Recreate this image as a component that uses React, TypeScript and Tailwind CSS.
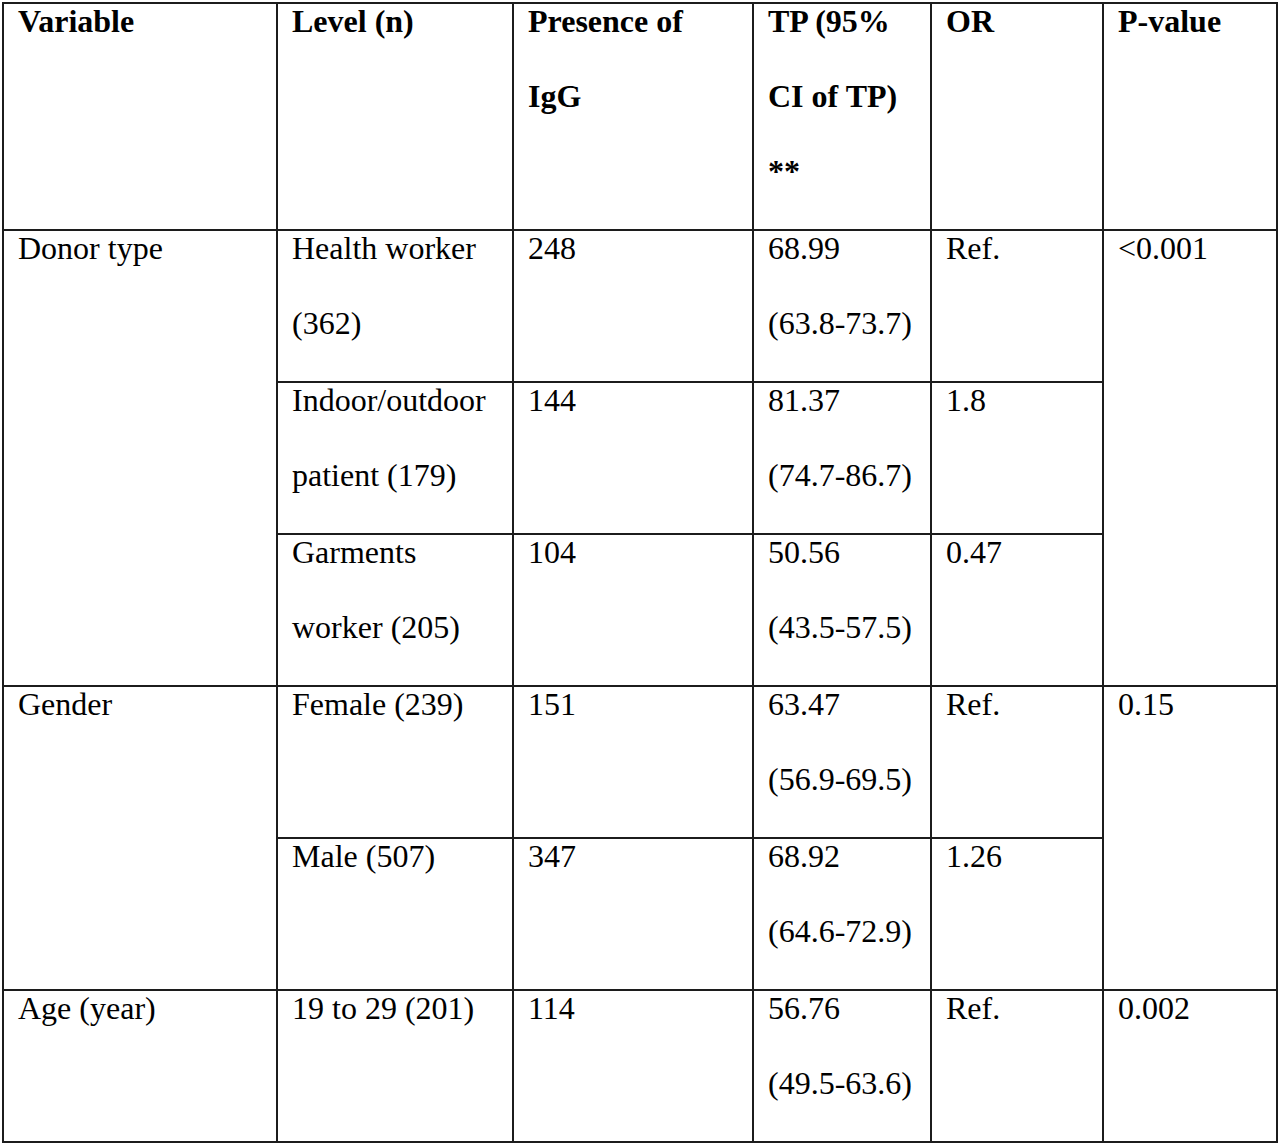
import React from "react";

type Cell = { lines: string[]; rowSpan?: number };

const Lines = ({ lines }: { lines: string[] }) => (
  <div>
    {lines.map((l, i) => (
      <div key={i} className="h-[75px] leading-[35px] whitespace-nowrap">
        {l}
      </div>
    ))}
  </div>
);

const td = "border-2 border-[#1c1c1c] align-top pl-[14px] pr-1 py-0";

export default function App() {
  const header = [
    ["Variable"],
    ["Level (n)"],
    ["Presence of", "IgG"],
    ["TP (95%", "CI of TP)", "**"],
    ["OR"],
    ["P-value"],
  ];

  const rows: Cell[][] = [
    [
      { lines: ["Donor type"], rowSpan: 3 },
      { lines: ["Health worker", "(362)"] },
      { lines: ["248"] },
      { lines: ["68.99", "(63.8-73.7)"] },
      { lines: ["Ref."] },
      { lines: ["<0.001"], rowSpan: 3 },
    ],
    [
      { lines: ["Indoor/outdoor", "patient (179)"] },
      { lines: ["144"] },
      { lines: ["81.37", "(74.7-86.7)"] },
      { lines: ["1.8"] },
    ],
    [
      { lines: ["Garments", "worker (205)"] },
      { lines: ["104"] },
      { lines: ["50.56", "(43.5-57.5)"] },
      { lines: ["0.47"] },
    ],
    [
      { lines: ["Gender"], rowSpan: 2 },
      { lines: ["Female (239)"] },
      { lines: ["151"] },
      { lines: ["63.47", "(56.9-69.5)"] },
      { lines: ["Ref."] },
      { lines: ["0.15"], rowSpan: 2 },
    ],
    [
      { lines: ["Male (507)"] },
      { lines: ["347"] },
      { lines: ["68.92", "(64.6-72.9)"] },
      { lines: ["1.26"] },
    ],
    [
      { lines: ["Age (year)"] },
      { lines: ["19 to 29 (201)"] },
      { lines: ["114"] },
      { lines: ["56.76", "(49.5-63.6)"] },
      { lines: ["Ref."] },
      { lines: ["0.002"] },
    ],
  ];

  return (
    <div className="w-[1280px] h-[1143px] bg-white overflow-hidden pt-[2px] pl-[2px]">
      <table
        className="table-fixed border-collapse w-[1274px] text-black text-[32px]"
        style={{ fontFamily: '"Liberation Serif", "Times New Roman", serif' }}
      >
        <colgroup>
          <col className="w-[274px]" />
          <col className="w-[236px]" />
          <col className="w-[240px]" />
          <col className="w-[178px]" />
          <col className="w-[172px]" />
          <col className="w-[174px]" />
        </colgroup>
        <thead>
          <tr>
            {header.map((h, i) => (
              <th key={i} className={`${td} text-left font-bold`}>
                <Lines lines={h} />
              </th>
            ))}
          </tr>
        </thead>
        <tbody>
          {rows.map((r, ri) => (
            <tr key={ri}>
              {r.map((c, ci) => (
                <td key={ci} rowSpan={c.rowSpan} className={td}>
                  <Lines lines={c.lines.length === 1 ? [c.lines[0], ""] : c.lines} />
                </td>
              ))}
            </tr>
          ))}
        </tbody>
      </table>
    </div>
  );
}
